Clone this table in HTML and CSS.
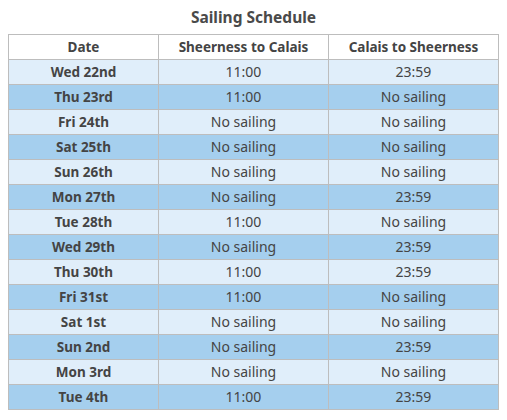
FILE: index.html
```html
<!DOCTYPE html>
<html>
<head>
<meta charset="utf-8">
<link rel="stylesheet" href="styles.css">
</head>
<body>
<table class="schedule">
<caption class="title">Sailing Schedule</caption>
<thead>
<tr><th>Date</th><th>Sheerness to Calais</th><th>Calais to Sheerness</th></tr>
</thead>
<tbody>
<tr class="light"><th>Wed 22nd</th><td>11:00</td><td>23:59</td></tr>
<tr class="dark"><th>Thu 23rd</th><td>11:00</td><td>No sailing</td></tr>
<tr class="light"><th>Fri 24th</th><td>No sailing</td><td>No sailing</td></tr>
<tr class="dark"><th>Sat 25th</th><td>No sailing</td><td>No sailing</td></tr>
<tr class="light"><th>Sun 26th</th><td>No sailing</td><td>No sailing</td></tr>
<tr class="dark"><th>Mon 27th</th><td>No sailing</td><td>23:59</td></tr>
<tr class="light"><th>Tue 28th</th><td>11:00</td><td>No sailing</td></tr>
<tr class="dark"><th>Wed 29th</th><td>No sailing</td><td>23:59</td></tr>
<tr class="light"><th>Thu 30th</th><td>11:00</td><td>23:59</td></tr>
<tr class="dark"><th>Fri 31st</th><td>11:00</td><td>No sailing</td></tr>
<tr class="light"><th>Sat 1st</th><td>No sailing</td><td>No sailing</td></tr>
<tr class="dark"><th>Sun 2nd</th><td>No sailing</td><td>23:59</td></tr>
<tr class="light"><th>Mon 3rd</th><td>No sailing</td><td>No sailing</td></tr>
<tr class="dark"><th>Tue 4th</th><td>11:00</td><td>23:59</td></tr>
</tbody>
</table>
</body>
</html>
```
FILE: styles.css
```css
body {
  margin: 8px;
  background: #ffffff;
  font-family: "Noto Sans", "DejaVu Sans", sans-serif;
  color: #444444;
}
.schedule {
  width: 491px;
  border-collapse: collapse;
  table-layout: fixed;
  font-size: 14px;
}
.title {
  font-weight: bold;
  font-size: 15.5px;
  color: #4a4a4a;
  height: 26px;
  line-height: 18px;
  padding-top: 0;
  text-align: center;
}
.schedule th,
.schedule td {
  border: 1px solid #bdbdbd;
  height: 24px;
  padding: 0;
  text-align: center;
  vertical-align: middle;
  line-height: 18px;
}
.schedule th {
  font-weight: bold;
  font-size: 13.5px;
}
.schedule td {
  font-weight: normal;
}
.schedule th:first-child { width: 149px; }
.schedule thead tr { background: #ffffff; }
.light { background: #e0eefa; }
.dark { background: #a5cfee; }
```
